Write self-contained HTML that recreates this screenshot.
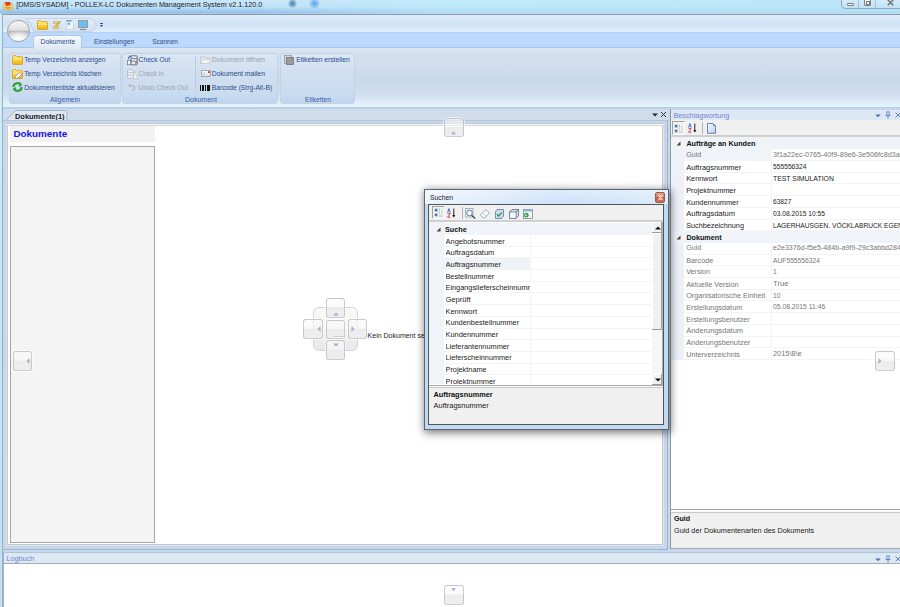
<!DOCTYPE html>
<html><head><meta charset="utf-8"><style>
html,body{margin:0;padding:0;}
body{width:900px;height:607px;position:relative;overflow:hidden;background:#c3dcf3;font-family:"Liberation Sans",sans-serif;}
div{position:absolute;}
.t{white-space:nowrap;line-height:1;}
svg{overflow:visible}
</style></head><body>
<div style="left:0px;top:0px;width:900px;height:14px;background:linear-gradient(180deg,#cae6f8 0%,#bde1f7 50%,#acd4f2 64%,#96c0ea 90%,#a8cbee 100%)"></div>
<div style="left:250px;top:0px;width:650px;height:14px;background:linear-gradient(90deg,rgba(200,236,250,0) 0%,rgba(190,235,250,.7) 30%,rgba(185,230,248,.8) 100%)"></div>
<div style="left:288px;top:-1px;width:9px;height:9px;border-radius:50%;background:radial-gradient(circle,rgba(50,120,130,.85) 0%,rgba(70,120,170,.5) 45%,rgba(150,200,240,0) 75%)"></div>
<div style="left:309px;top:-2px;width:11px;height:11px;border-radius:50%;background:radial-gradient(circle,rgba(70,150,230,.85) 0%,rgba(100,170,240,.5) 45%,rgba(150,200,240,0) 75%)"></div>
<svg style="position:absolute;left:3px;top:1px" width="10" height="9" viewBox="0 0 10 9"><rect x="0.5" y="2" width="9" height="7" rx="1" fill="#f6cf6a" stroke="#d9a441" stroke-width="0.6"/><path d="M2 1 L7 1 L8 4 L3 5 Z" fill="#e03a2a"/><path d="M2.5 6.5 Q5 8 7.5 6.5" stroke="#8a5a10" stroke-width="0.7" fill="none"/></svg>
<div class="t" style="left:16.2px;top:2px;font-size:7.18px;color:#1b1b2b;font-weight:400;">[DMS/SYSADM] - POLLEX-LC Dokumenten Management System v2.1.120.0</div>
<div style="left:841px;top:-3px;width:70px;height:9.5px;border:1px solid #8fa9c1;border-radius:0 0 4px 4px;background:linear-gradient(180deg,#d6eefb,#c0e2f6)"></div>
<div style="left:858px;top:0px;width:1px;height:8px;background:#aac2d6"></div>
<div style="left:875px;top:0px;width:1px;height:8px;background:#aac2d6"></div>
<div style="left:847px;top:2.5px;width:5px;height:1.5px;background:#f4f4f4;border:1px solid #808080;border-radius:1px"></div>
<div style="left:864px;top:-1px;width:5px;height:5px;background:#f4f4f4;border:1px solid #808080;border-radius:1px"></div>
<div style="left:865.5px;top:1px;width:2px;height:1.5px;background:#f4f4f4;border:0.8px solid #7a7a7a"></div>
<svg style="position:absolute;left:887px;top:0px" width="7" height="6" viewBox="0 0 7 6"><path d="M0.8 0 L3.5 2.5 L6.2 0 M0.8 5.2 L3.5 2.5 L6.2 5.2" stroke="#707070" stroke-width="1.5" fill="none"/></svg>
<div style="left:2px;top:14px;width:898px;height:1px;background:#8c9aab"></div>
<div style="left:2px;top:14px;width:1px;height:593px;background:#9fadbb"></div>
<div style="left:0px;top:14px;width:2px;height:593px;background:linear-gradient(180deg,#d2f0fa 0%,#c8e8f8 40%,#bfdff6 100%)"></div>
<div style="left:3px;top:15px;width:897px;height:17px;background:linear-gradient(180deg,#e0ebf8 0%,#d3e3f6 40%,#d2e2f6 60%,#e4eefa 100%)"></div>
<div style="left:3px;top:32px;width:897px;height:15px;background:#bdd9fb;border-top:1px solid #b6d2f4;box-sizing:border-box"></div>
<svg style="position:absolute;left:20px;top:17px" width="80" height="16" viewBox="0 0 80 16"><defs><linearGradient id="qg" x1="0" y1="0" x2="0" y2="1"><stop offset="0" stop-color="#e2ecf8"/><stop offset="1" stop-color="#d2e0f2"/></linearGradient></defs><path d="M5.5 1.5 H69.5 A6.5 6.5 0 0 1 69.5 14.5 H13.5 Q12 6 5.5 1.5 Z" fill="url(#qg)" stroke="#c2d3e8" stroke-width="1"/></svg>
<div style="left:7px;top:19.5px;width:22.5px;height:22.5px;box-sizing:border-box;border-radius:50%;border:1px solid #a2a6aa;background:radial-gradient(ellipse 55% 40% at 50% 88%,rgba(255,255,255,1) 0%,rgba(255,255,255,0) 100%),linear-gradient(180deg,#f4f4f4 0%,#e4e4e4 40%,#d4d4d4 48%,#b8b8b8 51%,#c4c4c4 57%,#d8d8d8 72%,#eeeeee 100%)"></div>
<svg style="position:absolute;left:37px;top:19.5px" width="11" height="10" viewBox="0 0 11 10"><defs><linearGradient id="fg" x1="0" y1="0" x2="0" y2="1"><stop offset="0" stop-color="#ffe680"/><stop offset="0.5" stop-color="#f8cf3a"/><stop offset="1" stop-color="#eab218"/></linearGradient></defs><path d="M0.5 1.3 Q0.5 0.6 1.2 0.6 H3.8 L4.8 1.6 H9.8 Q10.5 1.6 10.5 2.3 V8.8 Q10.5 9.5 9.8 9.5 H1.2 Q0.5 9.5 0.5 8.8 Z" fill="url(#fg)" stroke="#d29d12" stroke-width="0.8"/><path d="M1 4.6 Q5 3.2 10 4.4" stroke="#fff3b0" stroke-width="0.8" fill="none"/></svg>
<svg style="position:absolute;left:52px;top:20.5px" width="8" height="8" viewBox="0 0 8 8"><path d="M1 1.5 H7 L2.5 6.5 H7.2" stroke="#c89a3a" stroke-width="2" fill="none"/><path d="M1.5 1.5 H6.5 L2.5 6.5 H6.8" stroke="#f2d070" stroke-width="1" fill="none"/><circle cx="6.5" cy="2.5" r="0.9" fill="#8cc04a"/></svg>
<svg style="position:absolute;left:65.5px;top:19.5px" width="8" height="10" viewBox="0 0 8 10"><path d="M0.5 0.5 H5.5 L7.5 2.5 V9.5 H0.5 Z" fill="#eef4fa" stroke="#c4cfdb" stroke-width="0.7"/><rect x="0.5" y="0.3" width="5" height="1.2" fill="#3d8ad0"/><rect x="1.8" y="2.8" width="2" height="2" fill="#5a9ad8"/></svg>
<svg style="position:absolute;left:78px;top:19.8px" width="10" height="10" viewBox="0 0 10 10"><rect x="0.5" y="0.5" width="9" height="7" fill="#6cc0ee" stroke="#9a9a9a" stroke-width="1"/><path d="M2 9.5 H8" stroke="#8a8a8a" stroke-width="1.2"/></svg>
<svg style="position:absolute;left:100px;top:23px" width="4" height="5" viewBox="0 0 4 5"><rect x="0" y="0" width="3" height="0.9" fill="#1a3f80"/><path d="M0 2 h3 l-1.5 2 z" fill="#1a3f80"/></svg>
<div class="t" style="left:94px;top:39px;font-size:6.69px;color:#2a4c8c;font-weight:400;">Einstellungen</div>
<div class="t" style="left:152.2px;top:39px;font-size:6.53px;color:#2a4c8c;font-weight:400;">Scannen</div>
<div style="left:3px;top:47px;width:897px;height:60px;border-top:1px solid #a9c6ec;box-sizing:border-box;background:linear-gradient(180deg,#dde7f2 0%,#d3dfed 12%,#c9d9ec 55%,#cfdef0 78%,#e2eefa 94%,#e6f1fc 100%)"></div>
<div style="left:33px;top:34.5px;width:49px;height:14px;box-sizing:border-box;border:1px solid #b3c8e4;border-bottom:none;border-radius:3px 3px 0 0;background:linear-gradient(180deg,#f6f9fd 0%,#eaf1f9 50%,#dee8f3 100%)"></div>
<div class="t" style="left:40.5px;top:39px;font-size:6.79px;color:#2a4c8c;font-weight:400;">Dokumente</div>
<div style="left:8.7px;top:52.7px;width:112.3px;height:51.3px;border:1px solid #c3d3e6;border-radius:3px;background:linear-gradient(180deg,#dae6f4 0%,#cfdef0 45%,#c9daee 100%);box-sizing:border-box;overflow:hidden"><div style="position:absolute;left:0;right:0;bottom:0;height:9.5px;background:linear-gradient(180deg,#c8dcf1,#c0d6ee)"></div></div>
<div class="t" style="left:50px;top:97px;font-size:6.83px;color:#3d62a8;font-weight:400;">Allgemein</div>
<div style="left:122.4px;top:52.7px;width:155.2px;height:51.3px;border:1px solid #c3d3e6;border-radius:3px;background:linear-gradient(180deg,#dae6f4 0%,#cfdef0 45%,#c9daee 100%);box-sizing:border-box;overflow:hidden"><div style="position:absolute;left:0;right:0;bottom:0;height:9.5px;background:linear-gradient(180deg,#c8dcf1,#c0d6ee)"></div></div>
<div class="t" style="left:185px;top:96px;font-size:7.0px;color:#3d62a8;font-weight:400;">Dokument</div>
<div style="left:280.4px;top:52.7px;width:74.6px;height:51.3px;border:1px solid #c3d3e6;border-radius:3px;background:linear-gradient(180deg,#dae6f4 0%,#cfdef0 45%,#c9daee 100%);box-sizing:border-box;overflow:hidden"><div style="position:absolute;left:0;right:0;bottom:0;height:9.5px;background:linear-gradient(180deg,#c8dcf1,#c0d6ee)"></div></div>
<div class="t" style="left:305px;top:97px;font-size:6.68px;color:#3d62a8;font-weight:400;">Etiketten</div>
<div style="left:195px;top:56px;width:1px;height:34px;background:#b9cbe0"></div>
<svg style="position:absolute;left:12px;top:55px" width="11" height="10" viewBox="0 0 11 10"><defs><linearGradient id="fg" x1="0" y1="0" x2="0" y2="1"><stop offset="0" stop-color="#ffe680"/><stop offset="0.5" stop-color="#f8cf3a"/><stop offset="1" stop-color="#eab218"/></linearGradient></defs><path d="M0.5 1.3 Q0.5 0.6 1.2 0.6 H3.8 L4.8 1.6 H9.8 Q10.5 1.6 10.5 2.3 V8.8 Q10.5 9.5 9.8 9.5 H1.2 Q0.5 9.5 0.5 8.8 Z" fill="url(#fg)" stroke="#d29d12" stroke-width="0.8"/><path d="M1 4.6 Q5 3.2 10 4.4" stroke="#fff3b0" stroke-width="0.8" fill="none"/></svg>
<div class="t" style="left:24.2px;top:57px;font-size:6.68px;color:#2a4c8c;font-weight:400;">Temp Verzeichnis anzeigen</div>
<svg style="position:absolute;left:12px;top:68.5px" width="11" height="10" viewBox="0 0 11 10"><defs><linearGradient id="fg" x1="0" y1="0" x2="0" y2="1"><stop offset="0" stop-color="#ffe680"/><stop offset="0.5" stop-color="#f8cf3a"/><stop offset="1" stop-color="#eab218"/></linearGradient></defs><path d="M0.5 1.3 Q0.5 0.6 1.2 0.6 H3.8 L4.8 1.6 H9.8 Q10.5 1.6 10.5 2.3 V8.8 Q10.5 9.5 9.8 9.5 H1.2 Q0.5 9.5 0.5 8.8 Z" fill="url(#fg)" stroke="#d29d12" stroke-width="0.8"/><path d="M1 4.6 Q5 3.2 10 4.4" stroke="#fff3b0" stroke-width="0.8" fill="none"/><path d="M2.5 8 L7.5 3.5 L9.8 5.6 L5 9.5 Z" fill="#fafafa" stroke="#8a8a8a" stroke-width="0.7"/></svg>
<div class="t" style="left:24.2px;top:71px;font-size:6.69px;color:#2a4c8c;font-weight:400;">Temp Verzeichnis löschen</div>
<svg style="position:absolute;left:12px;top:82px" width="11" height="10" viewBox="0 0 11 10"><path d="M1.5 5 A4 3.6 0 0 1 9 3" stroke="#2fa33a" stroke-width="2.2" fill="none"/><path d="M9.5 5 A4 3.6 0 0 1 2 7" stroke="#2fa33a" stroke-width="2.2" fill="none"/><path d="M7 0.5 L10.5 3 L7 5 Z" fill="#2fa33a"/><path d="M4 5 L0.5 7 L4 9.5 Z" fill="#2fa33a"/></svg>
<div class="t" style="left:24.2px;top:85px;font-size:6.8px;color:#2a4c8c;font-weight:400;">Dokumentenliste aktualisieren</div>
<svg style="position:absolute;left:127px;top:55px" width="11" height="11" viewBox="0 0 11 11"><rect x="4" y="0.8" width="6.2" height="9" rx="0.8" fill="#e6ecf3" stroke="#4a5663" stroke-width="0.8"/><path d="M4.3 3.6 H10 M4.3 6.2 H10" stroke="#4a5663" stroke-width="0.7"/><rect x="8.2" y="7.2" width="1.4" height="1.4" fill="#d82a20"/><path d="M3.4 1.2 Q1.2 1.4 1.4 4" stroke="#3050c0" stroke-width="0.9" fill="none"/><path d="M2.6 0 L4 1.2 L2.6 2.4 Z" fill="#3050c0"/><rect x="0.5" y="5.5" width="3.2" height="4.3" fill="#f4f8fc" stroke="#50607a" stroke-width="0.6"/></svg>
<div class="t" style="left:138.6px;top:57px;font-size:6.69px;color:#2a4c8c;font-weight:400;">Check Out</div>
<svg style="position:absolute;left:127px;top:69px" width="11" height="11" viewBox="0 0 11 11"><rect x="0.5" y="0.8" width="6" height="8.5" rx="0.8" fill="#eceff2" stroke="#b4bac2" stroke-width="0.8"/><path d="M0.8 3.5 H6.3 M0.8 6 H6.3" stroke="#b4bac2" stroke-width="0.7"/><path d="M6.5 4 V7.5 L7.5 10.5 H10 V6.5 L8.5 5.5 V3 Q7.5 2.5 6.5 4 Z" fill="#f2f2f2" stroke="#b8b8b8" stroke-width="0.6"/></svg>
<div class="t" style="left:138.6px;top:71px;font-size:6.41px;color:#9aa3ae;font-weight:400;">Check In</div>
<svg style="position:absolute;left:128px;top:84px" width="8" height="7" viewBox="0 0 8 7"><path d="M2.2 2.2 Q5.5 0.8 6.5 3.2 Q7 6 4 6.5" stroke="#b0b4b8" stroke-width="1.2" fill="none"/><path d="M0.5 0.6 L3.2 0.6 L1.2 3.6 Z" fill="#b0b4b8"/></svg>
<div class="t" style="left:138.6px;top:85px;font-size:6.71px;color:#9aa3ae;font-weight:400;">Undo Check Out</div>
<svg style="position:absolute;left:200px;top:55px" width="11" height="9" viewBox="0 0 11 9"><path d="M0.5 2 h4 l1 1 h4 v5.5 h-9 z" fill="#e9e9e9" stroke="#bdbdbd" stroke-width="0.7"/><path d="M1 8.5 L3 4.5 H10.5 L9 8.5 Z" fill="#f4f4f4" stroke="#c4c4c4" stroke-width="0.6"/></svg>
<div class="t" style="left:211.8px;top:56px;font-size:7.0px;color:#9aa3ae;font-weight:400;">Dokument öffnen</div>
<svg style="position:absolute;left:201px;top:70px" width="10" height="7" viewBox="0 0 10 7"><defs><linearGradient id="mg" x1="0" y1="0" x2="0" y2="1"><stop offset="0" stop-color="#fdfdfd"/><stop offset="1" stop-color="#d4dae2"/></linearGradient></defs><rect x="0.5" y="0.5" width="9" height="6" fill="url(#mg)" stroke="#8a949e" stroke-width="0.7"/><path d="M1.5 3 H4.5 M1.5 4.3 H4" stroke="#b0b8c0" stroke-width="0.5"/><rect x="7" y="1.2" width="1.8" height="1.8" fill="#e02a1c"/></svg>
<div class="t" style="left:211.8px;top:71px;font-size:6.84px;color:#2a4c8c;font-weight:400;">Dokument mailen</div>
<svg style="position:absolute;left:200px;top:84.5px" width="10" height="6" viewBox="0 0 10 6"><path d="M0.5 0v5.5M2.5 0v5.5M3.5 0v5.5M5.5 0v5.5M7.5 0v5.5M8.5 0v5.5M9.5 0v5.5" stroke="#111" stroke-width="1" shape-rendering="crispEdges"/></svg>
<div class="t" style="left:211.8px;top:85px;font-size:6.71px;color:#2a4c8c;font-weight:400;">Barcode (Strg-Alt-B)</div>
<svg style="position:absolute;left:284px;top:55px" width="10" height="10" viewBox="0 0 10 10"><rect x="0.5" y="0.5" width="7" height="8" fill="#d8d8d8" stroke="#8a8a8a" stroke-width="0.7"/><rect x="2.5" y="2.5" width="7" height="7" fill="#9a9a9a" stroke="#6a6a6a" stroke-width="0.7"/></svg>
<div class="t" style="left:296.2px;top:57px;font-size:6.74px;color:#2a4c8c;font-weight:400;">Etiketten erstellen</div>
<div style="left:3px;top:106px;width:897px;height:1px;background:#eaf4fc"></div>
<div style="left:3px;top:107px;width:897px;height:1px;background:#a9d3e8"></div>
<div style="left:3px;top:108px;width:897px;height:1px;background:#bdd0ef"></div>
<div style="left:3px;top:109px;width:667px;height:444px;background:#d1dcea"></div>
<svg style="position:absolute;left:6px;top:109px" width="64" height="13" viewBox="0 0 64 13"><path d="M0 11.5 L9.5 1.8 Q10.2 1.5 11 1.5 H59.5 Q61 1.5 61 3 V12" fill="#dde6f1" stroke="#a3b3c6" stroke-width="1"/></svg>
<div class="t" style="left:15px;top:113px;font-size:7.45px;color:#1a1a1a;font-weight:700;">Dokumente(1)</div>
<svg style="position:absolute;left:652px;top:113px" width="6" height="4" viewBox="0 0 6 4"><path d="M0 0.5 H6 L3 3.5 Z" fill="#1f2d3d"/></svg>
<svg style="position:absolute;left:660px;top:111px" width="7" height="7" viewBox="0 0 7 7"><path d="M1 1 L6 6 M6 1 L1 6" stroke="#22344e" stroke-width="1.0"/></svg>
<div style="left:3px;top:120px;width:665px;height:1px;background:#b6c4d4"></div>
<div style="left:3px;top:121px;width:667px;height:432px;background:#c5d7ee"></div>
<div style="left:6px;top:123px;width:658px;height:423px;background:#e2e4e8"></div>
<div style="left:7px;top:124px;width:656px;height:421px;background:#c3c7ce"></div>
<div style="left:8px;top:125px;width:654px;height:419px;background:#fff"></div>
<div style="left:6px;top:123px;width:658px;height:1px;background:#c2c7cf"></div>
<div style="left:7px;top:124px;width:656px;height:1px;background:#fbfbfb"></div>
<div style="left:8px;top:125px;width:654px;height:1px;background:#d2d6dc"></div>
<div style="left:667px;top:120px;width:1px;height:430px;background:#a3b1c2"></div>
<div style="left:3px;top:549px;width:665px;height:1px;background:#a3b3c6"></div>
<div style="left:10px;top:126px;width:145px;height:16px;background:#f2f2f2"></div>
<div class="t" style="left:13.4px;top:129px;font-size:9.88px;color:#1515f0;font-weight:700;">Dokumente</div>
<div style="left:10px;top:146px;width:145px;height:397px;background:#f4f4f4;border:1px solid #a6a6a6;box-sizing:border-box"></div>
<div style="left:443.5px;top:117.5px;width:20.5px;height:19.5px;border:1px solid rgba(160,160,160,.5);border-radius:3px;box-sizing:border-box;box-shadow:0 0 0 1px rgba(255,255,255,.5);background:linear-gradient(180deg,rgba(252,252,252,.55) 0%,rgba(247,247,247,.65) 46%,#ececec 50%,#efefef 100%)"></div>
<svg style="position:absolute;left:451.25px;top:130.5px" width="5" height="3.5" viewBox="0 0 5 3.5"><path d="M0 3.2 H5 L2.5 0.3 Z" fill="#9fade2"/></svg>
<div style="left:12.5px;top:351.3px;width:19.5px;height:19.3px;border:1px solid rgba(160,160,160,.5);border-radius:3px;box-sizing:border-box;box-shadow:0 0 0 1px rgba(255,255,255,.5);background:linear-gradient(180deg,rgba(252,252,252,.55) 0%,rgba(247,247,247,.65) 46%,#ececec 50%,#efefef 100%)"></div>
<svg style="position:absolute;left:26px;top:357.5px" width="4" height="6" viewBox="0 0 4 6"><path d="M3.5 0 V6 L0.5 3 Z" fill="#9fade2"/></svg>
<div style="left:312.5px;top:306.7px;width:45.5px;height:44px;border:1px solid #d4d4d4;border-radius:6px;box-sizing:border-box;background:linear-gradient(180deg,#f9f9f9 0%,#f3f3f3 50%,#e9e9e9 100%)"></div>
<div style="left:325.5px;top:298px;width:19.2px;height:19.5px;border:1px solid rgba(160,160,160,.5);border-radius:3px;box-sizing:border-box;box-shadow:0 0 0 1px rgba(255,255,255,.5);background:linear-gradient(180deg,rgba(252,252,252,.55) 0%,rgba(247,247,247,.65) 46%,#ececec 50%,#efefef 100%)"></div>
<svg style="position:absolute;left:332.5px;top:311.5px" width="6" height="4" viewBox="0 0 6 4"><path d="M0 3.5 H6 L3 0.5 Z" fill="#9fade2"/></svg>
<div style="left:303.3px;top:319px;width:19.7px;height:19.7px;border:1px solid rgba(160,160,160,.5);border-radius:3px;box-sizing:border-box;box-shadow:0 0 0 1px rgba(255,255,255,.5);background:linear-gradient(180deg,rgba(252,252,252,.55) 0%,rgba(247,247,247,.65) 46%,#ececec 50%,#efefef 100%)"></div>
<svg style="position:absolute;left:317px;top:326px" width="4" height="6" viewBox="0 0 4 6"><path d="M3.5 0 V6 L0.5 3 Z" fill="#9fade2"/></svg>
<div style="left:326px;top:320px;width:18.5px;height:18.5px;border:1px solid rgba(160,160,160,.5);border-radius:3px;box-sizing:border-box;box-shadow:0 0 0 1px rgba(255,255,255,.5);background:linear-gradient(180deg,rgba(252,252,252,.55) 0%,rgba(247,247,247,.65) 46%,#ececec 50%,#efefef 100%)"></div>
<div style="left:334px;top:335.5px;width:4px;height:1.2px;background:#fdfdfd;border-top:0.6px solid #c8c8c8"></div>
<div style="left:339px;top:335.5px;width:4px;height:1.2px;background:#fdfdfd;border-top:0.6px solid #c8c8c8"></div>
<div style="left:347.5px;top:319px;width:19.5px;height:19.7px;border:1px solid rgba(160,160,160,.5);border-radius:3px;box-sizing:border-box;box-shadow:0 0 0 1px rgba(255,255,255,.5);background:linear-gradient(180deg,rgba(252,252,252,.55) 0%,rgba(247,247,247,.65) 46%,#ececec 50%,#efefef 100%)"></div>
<svg style="position:absolute;left:350.5px;top:326px" width="4" height="6" viewBox="0 0 4 6"><path d="M0.5 0 V6 L3.5 3 Z" fill="#9fade2"/></svg>
<div style="left:325.5px;top:340.3px;width:19.2px;height:20.2px;border:1px solid rgba(160,160,160,.5);border-radius:3px;box-sizing:border-box;box-shadow:0 0 0 1px rgba(255,255,255,.5);background:linear-gradient(180deg,rgba(252,252,252,.55) 0%,rgba(247,247,247,.65) 46%,#ececec 50%,#efefef 100%)"></div>
<svg style="position:absolute;left:332.5px;top:343px" width="6" height="4" viewBox="0 0 6 4"><path d="M0 0.5 H6 L3 3.5 Z" fill="#9fade2"/></svg>
<div class="t" style="left:367.6px;top:332px;font-size:7.0px;color:#1b1b2b;font-weight:400;">Kein Dokument selektiert</div>
<div style="left:668px;top:108px;width:2px;height:445px;background:#c9d9ec"></div>
<div style="left:670px;top:108px;width:230px;height:445px;background:#c5d7ee"></div>
<div style="left:670px;top:109px;width:1px;height:440px;background:#8e9aa8"></div>
<div style="left:671px;top:109.5px;width:229px;height:10.5px;background:#dde8f5"></div>
<div class="t" style="left:673.4px;top:112px;font-size:7.3px;color:#6f86d0;font-weight:400;">Beschlagwortung</div>
<svg style="position:absolute;left:874.5px;top:114px" width="6" height="4" viewBox="0 0 6 4"><path d="M0.3 0.5 H5.7 L3 3.3 Z" fill="#5068c0"/></svg>
<svg style="position:absolute;left:884.5px;top:110.5px" width="6" height="8" viewBox="0 0 6 8"><path d="M1.8 0.8 H4.2 V4.6 H1.8 Z M0.6 4.6 H5.4 M3 4.6 V7.8" stroke="#5870c4" stroke-width="0.75" fill="#dfe6f6"/></svg>
<svg style="position:absolute;left:894.5px;top:111.5px" width="6" height="6" viewBox="0 0 6 6"><path d="M0.6 0.6 L5.4 5.4 M5.4 0.6 L0.6 5.4" stroke="#5870c4" stroke-width="0.9"/></svg>
<div style="left:671px;top:120px;width:229px;height:14.5px;background:#f0f0f0"></div>
<div style="left:671px;top:134.5px;width:229px;height:2px;background:#cfcfcf"></div>
<div style="left:672px;top:121px;width:13px;height:13.5px;border-top:1px solid #a0a0a0;border-left:1px solid #a0a0a0;border-right:1px solid #fafafa;border-bottom:1px solid #fafafa;background:#f2f2f2;box-sizing:border-box"></div>
<svg style="position:absolute;left:674px;top:123.5px" width="10" height="9" viewBox="0 0 10 9"><rect x="0.3" y="0.3" width="3.6" height="3.6" rx="0.6" fill="#a9cdf0"/><rect x="0.3" y="5.1" width="3.6" height="3.6" rx="0.6" fill="#a9cdf0"/><rect x="1.3" y="1.4" width="1.6" height="1.4" fill="#222"/><rect x="1.3" y="6.2" width="1.6" height="1.4" fill="#222"/><path d="M5.2 1v5.5M7.8 1.5v5" stroke="#c8d4cc" stroke-width="1.1"/><path d="M5 1.2h1M5 8h1.5M7.2 8h1.5" stroke="#777" stroke-width="0.6"/></svg>
<svg style="position:absolute;left:687.5px;top:123px" width="10" height="10" viewBox="0 0 10 10"><path d="M0.6 4.6 L1.9 0.5 L3.2 4.6 M1.1 3.2 H2.7" stroke="#4a6ad0" stroke-width="0.9" fill="none"/><path d="M0.5 5.6 H3.2 L0.6 9.2 H3.4" stroke="#c83a3a" stroke-width="0.9" fill="none"/><path d="M6.8 0.5 V8.6" stroke="#111" stroke-width="0.9"/><path d="M5.4 7 L6.8 9.5 L8.2 7 Z" fill="#111"/></svg>
<div style="left:702px;top:122px;width:1px;height:12px;background:#b4b4b4"></div>
<svg style="position:absolute;left:707px;top:122.5px" width="9" height="11" viewBox="0 0 9 11"><defs><linearGradient id="pg" x1="0" y1="0" x2="1" y2="1"><stop offset="0" stop-color="#f4f8fe"/><stop offset="1" stop-color="#bcd2f0"/></linearGradient></defs><path d="M0.5 0.5 H6 L8.5 3 V10.3 H0.5 Z" fill="url(#pg)" stroke="#4a6aa8" stroke-width="0.8"/><path d="M6 0.5 L8.5 3 H6 Z" fill="#3d8ee0"/></svg>
<div style="left:671px;top:137px;width:229px;height:372.5px;background:#ffffff"></div>
<div style="left:671px;top:137px;width:229px;height:2px;background:#f0f4f9"></div>
<div style="left:671px;top:137px;width:13px;height:222.89999999999998px;background:#eef2f8"></div>
<div style="left:671px;top:137.6px;width:229px;height:11.7px;background:#f0f4f9"></div>
<svg style="position:absolute;left:676px;top:140.95px" width="5" height="5" viewBox="0 0 5 5"><path d="M4.5 0.5 V4.5 H0.5 Z" fill="#404040"/></svg>
<div style="left:684px;top:149.29999999999998px;width:86.5px;height:10.7px;background:#f0f3f8"></div>
<div style="left:771px;top:149.29999999999998px;width:129px;height:10.7px;background:#fff"></div>
<div style="left:684px;top:159.99999999999997px;width:216px;height:1px;background:#f2f4f8"></div>
<div style="left:770.5px;top:149.29999999999998px;width:0.5px;height:11.7px;background:#f2f4f8"></div>
<div style="left:684px;top:161.0px;width:86.5px;height:10.7px;background:#fff"></div>
<div style="left:771px;top:161.0px;width:129px;height:10.7px;background:#fff"></div>
<div style="left:684px;top:171.7px;width:216px;height:1px;background:#f2f4f8"></div>
<div style="left:770.5px;top:161.0px;width:0.5px;height:11.7px;background:#f2f4f8"></div>
<div style="left:684px;top:172.7px;width:86.5px;height:10.7px;background:#fff"></div>
<div style="left:771px;top:172.7px;width:129px;height:10.7px;background:#fff"></div>
<div style="left:684px;top:183.39999999999998px;width:216px;height:1px;background:#f2f4f8"></div>
<div style="left:770.5px;top:172.7px;width:0.5px;height:11.7px;background:#f2f4f8"></div>
<div style="left:684px;top:184.39999999999998px;width:86.5px;height:10.7px;background:#fff"></div>
<div style="left:771px;top:184.39999999999998px;width:129px;height:10.7px;background:#fff"></div>
<div style="left:684px;top:195.09999999999997px;width:216px;height:1px;background:#f2f4f8"></div>
<div style="left:770.5px;top:184.39999999999998px;width:0.5px;height:11.7px;background:#f2f4f8"></div>
<div style="left:684px;top:196.1px;width:86.5px;height:10.7px;background:#fff"></div>
<div style="left:771px;top:196.1px;width:129px;height:10.7px;background:#fff"></div>
<div style="left:684px;top:206.79999999999998px;width:216px;height:1px;background:#f2f4f8"></div>
<div style="left:770.5px;top:196.1px;width:0.5px;height:11.7px;background:#f2f4f8"></div>
<div style="left:684px;top:207.79999999999998px;width:86.5px;height:10.7px;background:#fff"></div>
<div style="left:771px;top:207.79999999999998px;width:129px;height:10.7px;background:#fff"></div>
<div style="left:684px;top:218.49999999999997px;width:216px;height:1px;background:#f2f4f8"></div>
<div style="left:770.5px;top:207.79999999999998px;width:0.5px;height:11.7px;background:#f2f4f8"></div>
<div style="left:684px;top:219.5px;width:86.5px;height:10.7px;background:#fff"></div>
<div style="left:771px;top:219.5px;width:129px;height:10.7px;background:#fff"></div>
<div style="left:684px;top:230.2px;width:216px;height:1px;background:#f2f4f8"></div>
<div style="left:770.5px;top:219.5px;width:0.5px;height:11.7px;background:#f2f4f8"></div>
<div style="left:671px;top:231.2px;width:229px;height:11.7px;background:#f0f4f9"></div>
<svg style="position:absolute;left:676px;top:234.54999999999998px" width="5" height="5" viewBox="0 0 5 5"><path d="M4.5 0.5 V4.5 H0.5 Z" fill="#404040"/></svg>
<div style="left:684px;top:242.89999999999998px;width:86.5px;height:10.7px;background:#fff"></div>
<div style="left:771px;top:242.89999999999998px;width:129px;height:10.7px;background:#fff"></div>
<div style="left:684px;top:253.59999999999997px;width:216px;height:1px;background:#f2f4f8"></div>
<div style="left:770.5px;top:242.89999999999998px;width:0.5px;height:11.7px;background:#f2f4f8"></div>
<div style="left:684px;top:254.6px;width:86.5px;height:10.7px;background:#fff"></div>
<div style="left:771px;top:254.6px;width:129px;height:10.7px;background:#fff"></div>
<div style="left:684px;top:265.3px;width:216px;height:1px;background:#f2f4f8"></div>
<div style="left:770.5px;top:254.6px;width:0.5px;height:11.7px;background:#f2f4f8"></div>
<div style="left:684px;top:266.29999999999995px;width:86.5px;height:10.7px;background:#fff"></div>
<div style="left:771px;top:266.29999999999995px;width:129px;height:10.7px;background:#fff"></div>
<div style="left:684px;top:276.99999999999994px;width:216px;height:1px;background:#f2f4f8"></div>
<div style="left:770.5px;top:266.29999999999995px;width:0.5px;height:11.7px;background:#f2f4f8"></div>
<div style="left:684px;top:278.0px;width:86.5px;height:10.7px;background:#fff"></div>
<div style="left:771px;top:278.0px;width:129px;height:10.7px;background:#fff"></div>
<div style="left:684px;top:288.7px;width:216px;height:1px;background:#f2f4f8"></div>
<div style="left:770.5px;top:278.0px;width:0.5px;height:11.7px;background:#f2f4f8"></div>
<div style="left:684px;top:289.7px;width:86.5px;height:10.7px;background:#fff"></div>
<div style="left:771px;top:289.7px;width:129px;height:10.7px;background:#fff"></div>
<div style="left:684px;top:300.4px;width:216px;height:1px;background:#f2f4f8"></div>
<div style="left:770.5px;top:289.7px;width:0.5px;height:11.7px;background:#f2f4f8"></div>
<div style="left:684px;top:301.4px;width:86.5px;height:10.7px;background:#fff"></div>
<div style="left:771px;top:301.4px;width:129px;height:10.7px;background:#fff"></div>
<div style="left:684px;top:312.09999999999997px;width:216px;height:1px;background:#f2f4f8"></div>
<div style="left:770.5px;top:301.4px;width:0.5px;height:11.7px;background:#f2f4f8"></div>
<div style="left:684px;top:313.1px;width:86.5px;height:10.7px;background:#fff"></div>
<div style="left:771px;top:313.1px;width:129px;height:10.7px;background:#fff"></div>
<div style="left:684px;top:323.8px;width:216px;height:1px;background:#f2f4f8"></div>
<div style="left:770.5px;top:313.1px;width:0.5px;height:11.7px;background:#f2f4f8"></div>
<div style="left:684px;top:324.79999999999995px;width:86.5px;height:10.7px;background:#fff"></div>
<div style="left:771px;top:324.79999999999995px;width:129px;height:10.7px;background:#fff"></div>
<div style="left:684px;top:335.49999999999994px;width:216px;height:1px;background:#f2f4f8"></div>
<div style="left:770.5px;top:324.79999999999995px;width:0.5px;height:11.7px;background:#f2f4f8"></div>
<div style="left:684px;top:336.5px;width:86.5px;height:10.7px;background:#fff"></div>
<div style="left:771px;top:336.5px;width:129px;height:10.7px;background:#fff"></div>
<div style="left:684px;top:347.2px;width:216px;height:1px;background:#f2f4f8"></div>
<div style="left:770.5px;top:336.5px;width:0.5px;height:11.7px;background:#f2f4f8"></div>
<div style="left:684px;top:348.2px;width:86.5px;height:10.7px;background:#fff"></div>
<div style="left:771px;top:348.2px;width:129px;height:10.7px;background:#fff"></div>
<div style="left:684px;top:358.9px;width:216px;height:1px;background:#f2f4f8"></div>
<div style="left:770.5px;top:348.2px;width:0.5px;height:11.7px;background:#f2f4f8"></div>
<div class="t" style="left:686.4px;top:140px;font-size:7.23px;color:#111;font-weight:700;">Aufträge an Kunden</div>
<div class="t" style="left:686.2px;top:152px;font-size:7.15px;color:#767676;font-weight:400;">Guid</div>
<div class="t" style="left:773px;top:151px;font-size:7.2px;color:#767676;font-weight:400;width:127px;overflow:hidden;padding:3px 0;margin-top:-3px;">3f1a22ec-0765-40f9-89e6-3e506fc8d3aa</div>
<div class="t" style="left:686.2px;top:164px;font-size:7.45px;color:#1b1b1b;font-weight:400;">Auftragsnummer</div>
<div class="t" style="left:773px;top:164px;font-size:6.69px;color:#1b1b1b;font-weight:400;width:127px;overflow:hidden;padding:3px 0;margin-top:-3px;">555556324</div>
<div class="t" style="left:686.2px;top:175px;font-size:7.36px;color:#1b1b1b;font-weight:400;">Kennwort</div>
<div class="t" style="left:773px;top:176px;font-size:6.89px;color:#1b1b1b;font-weight:400;width:127px;overflow:hidden;padding:3px 0;margin-top:-3px;">TEST SIMULATION</div>
<div class="t" style="left:686.2px;top:187px;font-size:7.34px;color:#1b1b1b;font-weight:400;">Projektnummer</div>
<div class="t" style="left:686.2px;top:199px;font-size:7.38px;color:#1b1b1b;font-weight:400;">Kundennummer</div>
<div class="t" style="left:773px;top:199px;font-size:6.58px;color:#1b1b1b;font-weight:400;width:127px;overflow:hidden;padding:3px 0;margin-top:-3px;">63827</div>
<div class="t" style="left:686.2px;top:210px;font-size:7.53px;color:#1b1b1b;font-weight:400;">Auftragsdatum</div>
<div class="t" style="left:773px;top:211px;font-size:6.68px;color:#1b1b1b;font-weight:400;width:127px;overflow:hidden;padding:3px 0;margin-top:-3px;">03.08.2015 10:55</div>
<div class="t" style="left:686.2px;top:222px;font-size:7.27px;color:#1b1b1b;font-weight:400;">Suchbezeichnung</div>
<div class="t" style="left:773px;top:223px;font-size:6.65px;color:#1b1b1b;font-weight:400;width:127px;overflow:hidden;padding:3px 0;margin-top:-3px;">LAGERHAUSGEN. VÖCKLABRUCK EGEN</div>
<div class="t" style="left:686.4px;top:234px;font-size:7.2px;color:#111;font-weight:700;">Dokument</div>
<div class="t" style="left:686.2px;top:245px;font-size:7.15px;color:#767676;font-weight:400;">Guid</div>
<div class="t" style="left:773px;top:245px;font-size:7.13px;color:#767676;font-weight:400;width:127px;overflow:hidden;padding:3px 0;margin-top:-3px;">e2e3376d-f5e5-484b-a9f9-29c3abbd284e</div>
<div class="t" style="left:686.2px;top:257px;font-size:7.28px;color:#767676;font-weight:400;">Barcode</div>
<div class="t" style="left:773px;top:258px;font-size:6.71px;color:#767676;font-weight:400;width:127px;overflow:hidden;padding:3px 0;margin-top:-3px;">AUF555556324</div>
<div class="t" style="left:686.2px;top:269px;font-size:7.16px;color:#767676;font-weight:400;">Version</div>
<div class="t" style="left:773px;top:269px;font-size:6.7px;color:#767676;font-weight:400;width:127px;overflow:hidden;padding:3px 0;margin-top:-3px;">1</div>
<div class="t" style="left:686.2px;top:281px;font-size:7.32px;color:#767676;font-weight:400;">Aktuelle Version</div>
<div class="t" style="left:773px;top:280px;font-size:7.67px;color:#767676;font-weight:400;width:127px;overflow:hidden;padding:3px 0;margin-top:-3px;">True</div>
<div class="t" style="left:686.2px;top:292px;font-size:7.26px;color:#767676;font-weight:400;">Organisatorische Einheit</div>
<div class="t" style="left:773px;top:293px;font-size:6.7px;color:#767676;font-weight:400;width:127px;overflow:hidden;padding:3px 0;margin-top:-3px;">10</div>
<div class="t" style="left:686.2px;top:304px;font-size:7.25px;color:#767676;font-weight:400;">Erstellungsdatum</div>
<div class="t" style="left:773px;top:304px;font-size:6.78px;color:#767676;font-weight:400;width:127px;overflow:hidden;padding:3px 0;margin-top:-3px;">05.08.2015 11:46</div>
<div class="t" style="left:686.2px;top:316px;font-size:7.2px;color:#767676;font-weight:400;">Erstellungsbenutzer</div>
<div class="t" style="left:686.2px;top:327px;font-size:7.47px;color:#767676;font-weight:400;">Änderungsdatum</div>
<div class="t" style="left:686.2px;top:339px;font-size:7.33px;color:#767676;font-weight:400;">Änderungsbenutzer</div>
<div class="t" style="left:686.2px;top:351px;font-size:7.22px;color:#767676;font-weight:400;">Unterverzeichnis</div>
<div class="t" style="left:773px;top:350px;font-size:7.42px;color:#767676;font-weight:400;width:127px;overflow:hidden;padding:3px 0;margin-top:-3px;">2015\8\e</div>
<div style="left:671px;top:509px;width:229px;height:1px;background:#a4a4a4"></div>
<div style="left:671px;top:510px;width:229px;height:2px;background:#fafafa"></div>
<div style="left:671px;top:512px;width:229px;height:36px;background:#f0f0f0;border-top:1px solid #c8c8c8;box-sizing:border-box"></div>
<div class="t" style="left:674px;top:516px;font-size:7.11px;color:#111;font-weight:700;">Guid</div>
<div class="t" style="left:674px;top:527px;font-size:7.27px;color:#1b1b1b;font-weight:400;">Guid der Dokumentenarten des Dokuments</div>
<div style="left:671px;top:548px;width:229px;height:1px;background:#a8a8a8"></div>
<div style="left:670px;top:549px;width:230px;height:4px;background:#c6d7ee"></div>
<div style="left:3px;top:552px;width:897px;height:1px;background:#b3c2d4"></div>
<div style="left:875.1px;top:351.3px;width:19.7px;height:19.3px;border:1px solid rgba(160,160,160,.5);border-radius:3px;box-sizing:border-box;box-shadow:0 0 0 1px rgba(255,255,255,.5);background:linear-gradient(180deg,rgba(252,252,252,.55) 0%,rgba(247,247,247,.65) 46%,#ececec 50%,#efefef 100%)"></div>
<svg style="position:absolute;left:877.5px;top:357.5px" width="4" height="6" viewBox="0 0 4 6"><path d="M0.5 0 V6 L3.5 3 Z" fill="#9fade2"/></svg>
<div style="left:3px;top:553px;width:897px;height:10px;background:#dde8f5"></div>
<div style="left:3px;top:563px;width:897px;height:1px;background:#a2adba"></div>
<div style="left:3px;top:564px;width:897px;height:43px;background:#fff"></div>
<div style="left:3px;top:553px;width:1px;height:54px;background:#a6b2be"></div>
<div class="t" style="left:6.5px;top:555px;font-size:7.22px;color:#6f86d0;font-weight:400;">Logbuch</div>
<svg style="position:absolute;left:874.5px;top:558px" width="6" height="4" viewBox="0 0 6 4"><path d="M0.3 0.5 H5.7 L3 3.3 Z" fill="#5068c0"/></svg>
<svg style="position:absolute;left:884.5px;top:554.5px" width="6" height="8" viewBox="0 0 6 8"><path d="M1.8 0.8 H4.2 V4.6 H1.8 Z M0.6 4.6 H5.4 M3 4.6 V7.8" stroke="#5870c4" stroke-width="0.75" fill="#dfe6f6"/></svg>
<svg style="position:absolute;left:894.5px;top:555.5px" width="6" height="6" viewBox="0 0 6 6"><path d="M0.6 0.6 L5.4 5.4 M5.4 0.6 L0.6 5.4" stroke="#5870c4" stroke-width="0.9"/></svg>
<div style="left:444px;top:585px;width:19.5px;height:19.5px;border:1px solid rgba(160,160,160,.5);border-radius:3px;box-sizing:border-box;box-shadow:0 0 0 1px rgba(255,255,255,.5);background:linear-gradient(180deg,rgba(252,252,252,.55) 0%,rgba(247,247,247,.65) 46%,#ececec 50%,#efefef 100%)"></div>
<svg style="position:absolute;left:451.25px;top:587.8px" width="5" height="3.5" viewBox="0 0 5 3.5"><path d="M0 0.3 H5 L2.5 3.2 Z" fill="#9fade2"/></svg>
<div style="left:424px;top:189px;width:245px;height:241px;box-sizing:border-box;border:1px solid #5b6570;box-shadow:1px 2px 8px 1px rgba(0,0,0,.5);background:linear-gradient(90deg,#e8f2fb 0%,#dceafa 22%,#c4def7 55%,#cae2f8 80%,#d6e9f9 100%)"></div>
<div style="left:425px;top:190px;width:243px;height:14px;background:linear-gradient(180deg,rgba(255,255,255,.45),rgba(255,255,255,.1))"></div>
<div style="left:425px;top:204px;width:243px;height:225px;background:#c2dbf3"></div>
<div class="t" style="left:430px;top:195px;font-size:6.84px;color:#1b1b2b;font-weight:400;">Suchen</div>
<div style="left:655px;top:192px;width:10px;height:10.5px;border:1px solid #9a5a48;border-radius:2px;box-sizing:border-box;background:linear-gradient(180deg,#eaa48e 0%,#d9735a 45%,#c85a3c 55%,#d87050 100%)"></div>
<svg style="position:absolute;left:657.5px;top:195px" width="5" height="5" viewBox="0 0 5 5"><path d="M0.5 0.8 H4.5 L0.5 4.2 H4.5 Z" stroke="#f4f4f4" stroke-width="1" fill="none"/></svg>
<div style="left:428px;top:204px;width:236px;height:221px;background:#f0f0f0;border:1px solid #50555c;box-sizing:border-box"></div>
<div style="left:429px;top:220px;width:234px;height:2px;background:#cfcfcf"></div>
<div style="left:431.5px;top:205.5px;width:13px;height:13.5px;border-top:1px solid #a0a0a0;border-left:1px solid #a0a0a0;border-right:1px solid #fafafa;border-bottom:1px solid #fafafa;background:#f2f2f2;box-sizing:border-box"></div>
<svg style="position:absolute;left:433.5px;top:208.0px" width="10" height="9" viewBox="0 0 10 9"><rect x="0.3" y="0.3" width="3.6" height="3.6" rx="0.6" fill="#a9cdf0"/><rect x="0.3" y="5.1" width="3.6" height="3.6" rx="0.6" fill="#a9cdf0"/><rect x="1.3" y="1.4" width="1.6" height="1.4" fill="#222"/><rect x="1.3" y="6.2" width="1.6" height="1.4" fill="#222"/><path d="M5.2 1v5.5M7.8 1.5v5" stroke="#c8d4cc" stroke-width="1.1"/><path d="M5 1.2h1M5 8h1.5M7.2 8h1.5" stroke="#777" stroke-width="0.6"/></svg>
<svg style="position:absolute;left:447.0px;top:207.5px" width="10" height="10" viewBox="0 0 10 10"><path d="M0.6 4.6 L1.9 0.5 L3.2 4.6 M1.1 3.2 H2.7" stroke="#4a6ad0" stroke-width="0.9" fill="none"/><path d="M0.5 5.6 H3.2 L0.6 9.2 H3.4" stroke="#c83a3a" stroke-width="0.9" fill="none"/><path d="M6.8 0.5 V8.6" stroke="#111" stroke-width="0.9"/><path d="M5.4 7 L6.8 9.5 L8.2 7 Z" fill="#111"/></svg>
<div style="left:461.5px;top:206.5px;width:1px;height:12px;background:#b4b4b4"></div>
<svg style="position:absolute;left:465px;top:207.5px" width="11" height="11" viewBox="0 0 11 11"><rect x="0.5" y="0.5" width="7.5" height="8.5" fill="#e4ecf2" stroke="#8aa0b0" stroke-width="0.7"/><circle cx="4.5" cy="5" r="2.8" fill="#f4f8fb" stroke="#6a8298" stroke-width="1"/><path d="M6.6 7.2 L10.2 10.4" stroke="#3a4a5a" stroke-width="1.3"/></svg>
<svg style="position:absolute;left:480px;top:209px" width="10" height="9" viewBox="0 0 10 9"><path d="M0.8 5.6 L5.2 1.2 Q6 0.5 6.8 1.2 L8.8 3.2 Q9.5 4 8.8 4.8 L4.6 8.6 Q3.8 9.2 3 8.6 L0.8 6.8 Q0.2 6.2 0.8 5.6 Z" fill="#f6f8fb" stroke="#8e98a6" stroke-width="0.8"/><path d="M2.4 4.2 L6.6 7.6" stroke="#b8c4d2" stroke-width="0.7"/></svg>
<svg style="position:absolute;left:495px;top:209px" width="9" height="10" viewBox="0 0 9 10"><path d="M2 0.5 H8.5 V7 L6.5 9.5 H0.5 V2.5 Z" fill="#c8daf0" stroke="#5a78a8" stroke-width="0.8"/><path d="M2 5.2 L3.6 7 L6.8 3.6" stroke="#22a040" stroke-width="1.2" fill="none"/></svg>
<svg style="position:absolute;left:509px;top:209px" width="10" height="10" viewBox="0 0 10 10"><path d="M0.5 3 L3 0.5 H9.5 V6.8 L7 9.5 H0.5 Z" fill="#cfe0f4" stroke="#5a6e88" stroke-width="0.8"/><path d="M0.5 3 H7 V9.5 M7 3 L9.5 0.5" stroke="#5a6e88" stroke-width="0.8" fill="none"/><rect x="1.2" y="3.6" width="5.2" height="5.3" fill="#f6f9fd"/></svg>
<svg style="position:absolute;left:522.5px;top:209px" width="10" height="10" viewBox="0 0 10 10"><rect x="0.5" y="0.5" width="9" height="9" fill="#f4f6f8" stroke="#7a8898" stroke-width="0.8"/><rect x="0.5" y="0.5" width="9" height="2" fill="#8fb4e0"/><circle cx="3.3" cy="6.2" r="2.4" fill="#2fa443"/><path d="M4.2 6.2 H2.2 M3 5.2 L2 6.2 L3 7.2" stroke="#fff" stroke-width="0.7" fill="none"/></svg>
<div style="left:429px;top:222px;width:223px;height:163px;background:#fff"></div>
<div style="left:429px;top:222px;width:223px;height:162px;overflow:hidden">
<div style="left:0px;top:0px;width:14.5px;height:170px;background:#f0f3f8"></div>
<div style="left:0px;top:1.2px;width:223px;height:11.7px;background:#f0f4f9"></div>
<svg style="position:absolute;left:6.5px;top:4.55px" width="5" height="5" viewBox="0 0 5 5"><path d="M4.5 0.5 V4.5 H0.5 Z" fill="#404040"/></svg>
<div style="left:14.5px;top:12.899999999999999px;width:86.5px;height:10.7px;background:#fff"></div>
<div style="left:14.5px;top:23.599999999999998px;width:208.5px;height:1px;background:#f2f4f8"></div>
<div style="left:101px;top:12.899999999999999px;width:0.5px;height:11.7px;background:#f2f4f8"></div>
<div style="left:14.5px;top:24.599999999999998px;width:86.5px;height:10.7px;background:#fff"></div>
<div style="left:14.5px;top:35.3px;width:208.5px;height:1px;background:#f2f4f8"></div>
<div style="left:101px;top:24.599999999999998px;width:0.5px;height:11.7px;background:#f2f4f8"></div>
<div style="left:14.5px;top:36.3px;width:86.5px;height:10.7px;background:#f0f2f7"></div>
<div style="left:14.5px;top:47.0px;width:208.5px;height:1px;background:#f2f4f8"></div>
<div style="left:101px;top:36.3px;width:0.5px;height:11.7px;background:#f2f4f8"></div>
<div style="left:14.5px;top:48.0px;width:86.5px;height:10.7px;background:#fff"></div>
<div style="left:14.5px;top:58.7px;width:208.5px;height:1px;background:#f2f4f8"></div>
<div style="left:101px;top:48.0px;width:0.5px;height:11.7px;background:#f2f4f8"></div>
<div style="left:14.5px;top:59.7px;width:86.5px;height:10.7px;background:#fff"></div>
<div style="left:14.5px;top:70.4px;width:208.5px;height:1px;background:#f2f4f8"></div>
<div style="left:101px;top:59.7px;width:0.5px;height:11.7px;background:#f2f4f8"></div>
<div style="left:14.5px;top:71.39999999999999px;width:86.5px;height:10.7px;background:#fff"></div>
<div style="left:14.5px;top:82.1px;width:208.5px;height:1px;background:#f2f4f8"></div>
<div style="left:101px;top:71.39999999999999px;width:0.5px;height:11.7px;background:#f2f4f8"></div>
<div style="left:14.5px;top:83.1px;width:86.5px;height:10.7px;background:#fff"></div>
<div style="left:14.5px;top:93.8px;width:208.5px;height:1px;background:#f2f4f8"></div>
<div style="left:101px;top:83.1px;width:0.5px;height:11.7px;background:#f2f4f8"></div>
<div style="left:14.5px;top:94.8px;width:86.5px;height:10.7px;background:#fff"></div>
<div style="left:14.5px;top:105.5px;width:208.5px;height:1px;background:#f2f4f8"></div>
<div style="left:101px;top:94.8px;width:0.5px;height:11.7px;background:#f2f4f8"></div>
<div style="left:14.5px;top:106.5px;width:86.5px;height:10.7px;background:#fff"></div>
<div style="left:14.5px;top:117.2px;width:208.5px;height:1px;background:#f2f4f8"></div>
<div style="left:101px;top:106.5px;width:0.5px;height:11.7px;background:#f2f4f8"></div>
<div style="left:14.5px;top:118.2px;width:86.5px;height:10.7px;background:#fff"></div>
<div style="left:14.5px;top:128.9px;width:208.5px;height:1px;background:#f2f4f8"></div>
<div style="left:101px;top:118.2px;width:0.5px;height:11.7px;background:#f2f4f8"></div>
<div style="left:14.5px;top:129.89999999999998px;width:86.5px;height:10.7px;background:#fff"></div>
<div style="left:14.5px;top:140.59999999999997px;width:208.5px;height:1px;background:#f2f4f8"></div>
<div style="left:101px;top:129.89999999999998px;width:0.5px;height:11.7px;background:#f2f4f8"></div>
<div style="left:14.5px;top:141.59999999999997px;width:86.5px;height:10.7px;background:#fff"></div>
<div style="left:14.5px;top:152.29999999999995px;width:208.5px;height:1px;background:#f2f4f8"></div>
<div style="left:101px;top:141.59999999999997px;width:0.5px;height:11.7px;background:#f2f4f8"></div>
<div style="left:14.5px;top:153.29999999999998px;width:86.5px;height:10.7px;background:#fff"></div>
<div style="left:14.5px;top:163.99999999999997px;width:208.5px;height:1px;background:#f2f4f8"></div>
<div style="left:101px;top:153.29999999999998px;width:0.5px;height:11.7px;background:#f2f4f8"></div>
<div class="t" style="left:16px;top:4px;font-size:7.23px;color:#111;font-weight:700;">Suche</div>
<div class="t" style="left:16.5px;top:16px;font-size:7.5px;color:#1b1b1b;font-weight:400;width:84.5px;overflow:hidden;padding:3px 0;margin-top:-3px;">Angebotsnummer</div>
<div class="t" style="left:16.5px;top:27px;font-size:7.52px;color:#1b1b1b;font-weight:400;width:84.5px;overflow:hidden;padding:3px 0;margin-top:-3px;">Auftragsdatum</div>
<div class="t" style="left:16.5px;top:39px;font-size:7.52px;color:#1b1b1b;font-weight:400;width:84.5px;overflow:hidden;padding:3px 0;margin-top:-3px;">Auftragsnummer</div>
<div class="t" style="left:16.5px;top:51px;font-size:7.3px;color:#1b1b1b;font-weight:400;width:84.5px;overflow:hidden;padding:3px 0;margin-top:-3px;">Bestellnummer</div>
<div class="t" style="left:16.5px;top:62px;font-size:7.35px;color:#1b1b1b;font-weight:400;width:84.5px;overflow:hidden;padding:3px 0;margin-top:-3px;">Eingangslieferscheinnummer</div>
<div class="t" style="left:16.5px;top:74px;font-size:7.52px;color:#1b1b1b;font-weight:400;width:84.5px;overflow:hidden;padding:3px 0;margin-top:-3px;">Geprüft</div>
<div class="t" style="left:16.5px;top:86px;font-size:7.46px;color:#1b1b1b;font-weight:400;width:84.5px;overflow:hidden;padding:3px 0;margin-top:-3px;">Kennwort</div>
<div class="t" style="left:16.5px;top:97px;font-size:7.37px;color:#1b1b1b;font-weight:400;width:84.5px;overflow:hidden;padding:3px 0;margin-top:-3px;">Kundenbestellnummer</div>
<div class="t" style="left:16.5px;top:109px;font-size:7.42px;color:#1b1b1b;font-weight:400;width:84.5px;overflow:hidden;padding:3px 0;margin-top:-3px;">Kundennummer</div>
<div class="t" style="left:16.5px;top:121px;font-size:7.37px;color:#1b1b1b;font-weight:400;width:84.5px;overflow:hidden;padding:3px 0;margin-top:-3px;">Lieferantennummer</div>
<div class="t" style="left:16.5px;top:132px;font-size:7.31px;color:#1b1b1b;font-weight:400;width:84.5px;overflow:hidden;padding:3px 0;margin-top:-3px;">Lieferscheinnummer</div>
<div class="t" style="left:16.5px;top:144px;font-size:7.34px;color:#1b1b1b;font-weight:400;width:84.5px;overflow:hidden;padding:3px 0;margin-top:-3px;">Projektname</div>
<div class="t" style="left:16.5px;top:156px;font-size:7.39px;color:#1b1b1b;font-weight:400;width:84.5px;overflow:hidden;padding:3px 0;margin-top:-3px;">Projektnummer</div>
</div>
<div style="left:652px;top:222px;width:10px;height:163px;background:#f6f6f6"></div>
<div style="left:662px;top:222px;width:1px;height:163px;background:#a6aeb8"></div>
<div style="left:652px;top:222px;width:10px;height:11px;border-right:1px solid #a6a6a6;border-bottom:1px solid #9a9a9a;box-sizing:border-box;background:#f0f0f0;box-shadow:inset 1px 1px #fff"></div>
<svg style="position:absolute;left:654.5px;top:225.5px" width="6" height="4" viewBox="0 0 6 4"><path d="M0 3.5 H6 L3 0.5 Z" fill="#111"/></svg>
<div style="left:652px;top:233px;width:10px;height:97px;border-right:1px solid #a6a6a6;border-bottom:1px solid #9a9a9a;box-sizing:border-box;background:#f0f0f0;box-shadow:inset 1px 1px #fff"></div>
<div style="left:652px;top:374px;width:10px;height:11px;border-right:1px solid #a6a6a6;border-bottom:1px solid #9a9a9a;box-sizing:border-box;background:#f0f0f0;box-shadow:inset 1px 1px #fff"></div>
<svg style="position:absolute;left:654.5px;top:377.5px" width="6" height="4" viewBox="0 0 6 4"><path d="M0 0.5 H6 L3 3.5 Z" fill="#111"/></svg>
<div style="left:429px;top:385px;width:234px;height:1px;background:#a8a8a8"></div>
<div style="left:429px;top:386px;width:234px;height:1px;background:#fafafa"></div>
<div style="left:429px;top:387px;width:234px;height:1px;background:#c8c8c8"></div>
<div class="t" style="left:433.5px;top:391px;font-size:7.35px;color:#111;font-weight:700;">Auftragsnummer</div>
<div class="t" style="left:433.5px;top:402px;font-size:7.47px;color:#1b1b1b;font-weight:400;">Auftragsnummer</div>
</body></html>
